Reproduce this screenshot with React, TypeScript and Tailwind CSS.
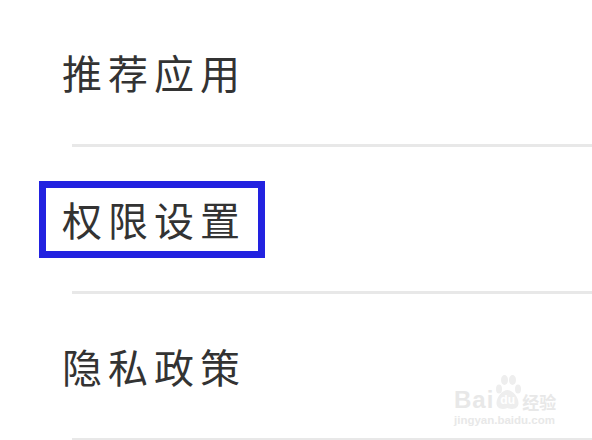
import { Fragment } from 'react'

const rows = ['推荐应用', '权限设置', '隐私政策']

function Watermark() {
  return (
    <div className="absolute left-[454px] top-[374px] w-[106px] text-[#e8e8e8]">
      <div className="flex h-[37px] items-end">
        <span className="font-['Liberation_Sans',sans-serif] text-[24px] font-bold leading-[22px] tracking-[1px]">Bai</span>
        <div className="relative h-[37px] w-[27px] shrink-0">
          <svg width="27" height="37" viewBox="0 0 27 37" className="fill-[#eeeeee]">
            <ellipse cx="5" cy="15" rx="3" ry="4.5" />
            <ellipse cx="10.5" cy="6" rx="3.5" ry="5" />
            <ellipse cx="18.5" cy="6" rx="3.5" ry="5" />
            <ellipse cx="24" cy="15" rx="3" ry="4.5" />
            <path d="M13.5 16c-5 0-11 7-11 13 0 6 6 7 11 5 5 2 11 1 11-5 0-6-6-13-11-13z" />
          </svg>
          <span className="absolute left-[6px] top-[20px] font-['Liberation_Sans',sans-serif] text-[12px] font-bold leading-[13px] text-white">du</span>
        </div>
        <span className="ml-[1px] text-[17px] font-bold leading-[19px]">经验</span>
      </div>
      <div className="mt-[3px] font-['Liberation_Sans',sans-serif] text-[11.5px] font-bold leading-[13px]">jingyan.baidu.com</div>
    </div>
  )
}

export default function App() {
  return (
    <div className="relative h-[440px] w-[592px] overflow-hidden bg-white font-['Noto_Sans_CJK_SC',sans-serif] text-[#333333]">
      {rows.map((r) => (
        <Fragment key={r}>
          <div className="flex h-[144px] items-center pb-[1px] pl-[62px]">
            <span className="text-[40px] font-normal leading-none tracking-[6px]">{r}</span>
          </div>
          <div className="ml-[72px] h-[3px] bg-[#e8e8e8]" />
        </Fragment>
      ))}
      <div className="absolute left-[39px] top-[181px] h-[77px] w-[226px] border-[7px] border-[#2222e0]" />
      <Watermark />
    </div>
  )
}
